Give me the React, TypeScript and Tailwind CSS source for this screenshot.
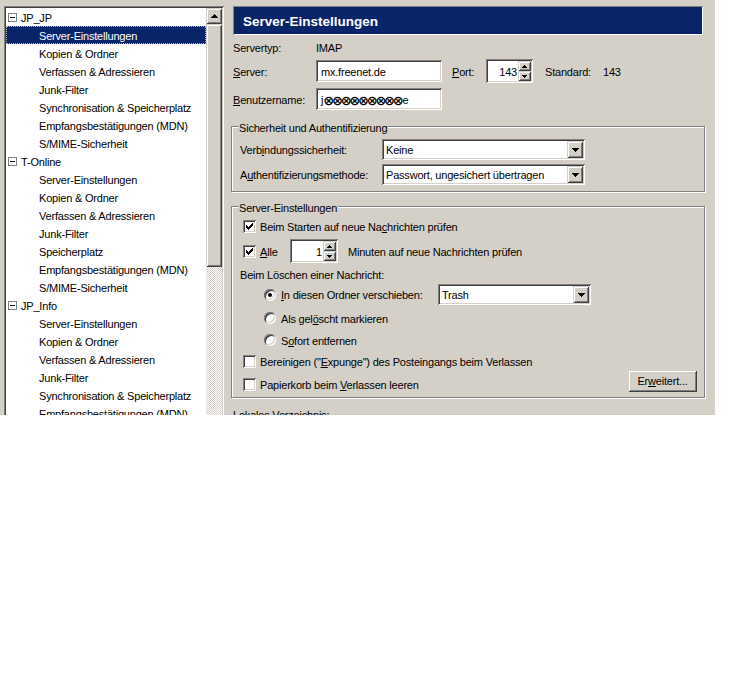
import React from "react";

const sunken =
  "shadow-[inset_1px_1px_0_#808080,inset_-1px_-1px_0_#ffffff,inset_2px_2px_0_#404040,inset_-2px_-2px_0_#d4d0c8]";
const raised =
  "shadow-[inset_1px_1px_0_#d4d0c8,inset_-1px_-1px_0_#404040,inset_2px_2px_0_#ffffff,inset_-2px_-2px_0_#808080]";
const etched =
  "border border-[#808080] shadow-[inset_1px_1px_0_#ffffff,1px_1px_0_#ffffff]";

function Tri({ dir, size = 7 }: { dir: "up" | "down"; size?: number }) {
  const rows = Math.ceil(size / 2);
  const rects = [];
  for (let i = 0; i < rows; i++) {
    const y = dir === "down" ? i : rows - 1 - i;
    rects.push(<rect key={i} x={i} y={y} width={size - 2 * i} height={1} fill="#000" />);
  }
  return (
    <svg width={size} height={rows} shapeRendering="crispEdges">
      {rects}
    </svg>
  );
}

const checkCols: [number, number][] = [
  [3, 5],
  [4, 6],
  [5, 7],
  [6, 6],
  [7, 5],
  [8, 4],
  [9, 3],
];

function Check({ checked }: { checked?: boolean }) {
  return (
    <div className={`relative w-[13px] h-[13px] shrink-0 bg-white ${sunken}`}>
      {checked && (
        <svg width="13" height="13" className="absolute left-0 top-0" shapeRendering="crispEdges">
          {checkCols.map(([x, y]) => (
            <rect key={x} x={x} y={y} width={1} height={3} fill="#000" />
          ))}
        </svg>
      )}
    </div>
  );
}

function Radio({ checked }: { checked?: boolean }) {
  return (
    <div
      className={`w-[12px] h-[12px] shrink-0 rounded-full bg-white flex items-center justify-center shadow-[inset_1px_1px_0_#808080,inset_-1px_-1px_0_#ffffff,inset_2px_2px_0_#404040,inset_-2px_-2px_0_#d4d0c8]`}
    >
      {checked && <div className="w-[4px] h-[4px] rounded-full bg-black" />}
    </div>
  );
}

function DropBtn() {
  return (
    <div className={`w-[16px] h-[17px] shrink-0 bg-[#d4d0c8] ${raised} flex items-center justify-center`}>
      <Tri dir="down" />
    </div>
  );
}

function Select({ text, className }: { text: string; className: string }) {
  return (
    <div className={`h-[21px] bg-white ${sunken} flex items-center p-[2px] ${className}`}>
      <div className="flex-1 pl-[2px] pt-[2px] whitespace-nowrap overflow-hidden">{text}</div>
      <DropBtn />
    </div>
  );
}

function Spin({ value, className }: { value: string; className: string }) {
  return (
    <div className={`h-[24px] bg-white ${sunken} flex p-[2px] ${className}`}>
      <div className="flex-1 flex items-center justify-end pr-[1px] pt-[2px]">{value}</div>
      <div className="w-[13px] flex flex-col">
        <div className={`flex-1 bg-[#d4d0c8] ${raised} flex items-center justify-center`}>
          <Tri dir="up" size={5} />
        </div>
        <div className={`flex-1 bg-[#d4d0c8] ${raised} flex items-center justify-center`}>
          <Tri dir="down" size={5} />
        </div>
      </div>
    </div>
  );
}

function Field({ children, className }: { children: React.ReactNode; className: string }) {
  return (
    <div className={`h-[22px] bg-white ${sunken} flex items-center pl-[5px] pt-[2px] ${className}`}>{children}</div>
  );
}

const U = ({ children }: { children: React.ReactNode }) => <span className="underline underline-offset-[1px]">{children}</span>;

type Item = { label: string; top?: boolean; selected?: boolean };
const sub = (labels: string[]): Item[] => labels.map((l) => ({ label: l }));
const tree: Item[] = [
  { label: "JP_JP", top: true },
  { label: "Server-Einstellungen", selected: true },
  ...sub([
    "Kopien & Ordner",
    "Verfassen & Adressieren",
    "Junk-Filter",
    "Synchronisation & Speicherplatz",
    "Empfangsbestätigungen (MDN)",
    "S/MIME-Sicherheit",
  ]),
  { label: "T-Online", top: true },
  ...sub([
    "Server-Einstellungen",
    "Kopien & Ordner",
    "Verfassen & Adressieren",
    "Junk-Filter",
    "Speicherplatz",
    "Empfangsbestätigungen (MDN)",
    "S/MIME-Sicherheit",
  ]),
  { label: "JP_Info", top: true },
  ...sub([
    "Server-Einstellungen",
    "Kopien & Ordner",
    "Verfassen & Adressieren",
    "Junk-Filter",
    "Synchronisation & Speicherplatz",
    "Empfangsbestätigungen (MDN)",
    "S/MIME-Sicherheit",
  ]),
];

function Tree() {
  return (
    <div className={`ml-[4px] mt-[6px] w-[220px] h-[430px] shrink-0 bg-white ${sunken} p-[2px] flex`}>
      <div className="w-[200px] flex flex-col">
        {tree.map((it, i) =>
          it.top ? (
            <div key={i} className="h-[18px] flex items-center shrink-0">
              <div className="ml-[2px] w-[9px] h-[9px] border border-[#808080] bg-white flex items-center justify-center">
                <div className="w-[5px] h-[1px] bg-black" />
              </div>
              <span className="ml-[4px] pt-[2px] whitespace-nowrap">{it.label}</span>
            </div>
          ) : (
            <div
              key={i}
              className={`h-[18px] flex items-center shrink-0 pl-[33px] pt-[2px] whitespace-nowrap ${
                it.selected
                  ? "bg-[#0a246a] text-white outline-1 outline-dotted outline-[#b8b8a8] -outline-offset-1"
                  : ""
              }`}
            >
              {it.label}
            </div>
          )
        )}
      </div>
      <div className="w-[16px] flex flex-col">
        <div className={`h-[16px] shrink-0 bg-[#d4d0c8] ${raised} flex items-center justify-center`}>
          <Tri dir="up" />
        </div>
        <div className={`h-[243px] shrink-0 bg-[#d4d0c8] ${raised}`} />
        <div className="flex-1 bg-[repeating-conic-gradient(#d4d0c8_0%_25%,#ffffff_0%_50%)] bg-[length:2px_2px]" />
      </div>
    </div>
  );
}

function Group({ title, className, children }: { title: string; className: string; children: React.ReactNode }) {
  return (
    <div className={`relative ${etched} ${className}`}>
      <span className="absolute -top-[5px] left-[6px] px-[1px] bg-[#d4d0c8] whitespace-nowrap">{title}</span>
      {children}
    </div>
  );
}

export default function App() {
  return (
    <div className="w-[744px] h-[676px] bg-white">
      <div className="w-[715px] h-[415px] overflow-hidden flex bg-[#d4d0c8] text-black text-[11px] leading-[13px] tracking-[-0.2px] font-['Liberation_Sans',Arial,sans-serif]">
        <Tree />
        <div className="ml-[7px] w-[474px] shrink-0 flex flex-col">
          <div className="mt-[6px] mx-[2px] h-[29px] shrink-0 bg-[#0a246a] shadow-[inset_1px_1px_0_#808080,inset_-1px_-1px_0_#ffffff] flex items-center pl-[10px] pt-[2px] text-white font-bold text-[13.5px] tracking-normal">
            Server-Einstellungen
          </div>

          <div className="mt-[3px] h-[18px] shrink-0 flex items-center pl-[2px] pt-[2px]">
            <span className="w-[83px]">Servertyp:</span>
            <span>IMAP</span>
          </div>

          <div className="mt-[3px] h-[24px] shrink-0 flex items-center pl-[2px]">
            <span className="w-[83px] pt-[2px]">
              <U>S</U>erver:
            </span>
            <Field className="w-[126px]">mx.freenet.de</Field>
            <span className="ml-[10px] w-[34px] pt-[2px]">
              <U>P</U>ort:
            </span>
            <Spin value="143" className="w-[47px]" />
            <span className="ml-[12px] w-[58px] pt-[2px]">Standard:</span>
            <span className="pt-[2px]">143</span>
          </div>

          <div className="mt-[5px] h-[22px] shrink-0 flex items-center pl-[2px]">
            <span className="w-[83px] pt-[2px]">
              <U>B</U>enutzername:
            </span>
            <Field className="w-[126px]">
              <span className="flex items-center leading-[13px]">
                <span>j</span>
                <span className="font-bold tracking-[-2.2px] font-['DejaVu_Sans',sans-serif] text-[13px]">⊗⊗⊗⊗⊗⊗⊗⊗⊗</span>
                <span className="ml-[1px]">e</span>
              </span>
            </Field>
          </div>

          <Group title="Sicherheit und Authentifizierung" className="mt-[16px] h-[66px] shrink-0 pt-[12px] pl-[8px] flex flex-col gap-[4px]">
            <div className="h-[21px] flex items-center">
              <span className="w-[142px] pt-[2px]">
                Verb<U>i</U>ndungssicherheit:
              </span>
              <Select text="Keine" className="w-[203px]" />
            </div>
            <div className="h-[21px] flex items-center">
              <span className="w-[142px] pt-[2px]">
                A<U>u</U>thentifizierungsmethode:
              </span>
              <Select text="Passwort, ungesichert übertragen" className="w-[203px]" />
            </div>
          </Group>

          <Group title="Server-Einstellungen" className="mt-[14px] h-[192px] shrink-0 pt-[13px] pl-[8px] pr-[7px] flex flex-col">
            <div className="h-[13px] flex items-center ml-[3px] gap-[4px]">
              <Check checked />
              <span className="pt-[2px]">
                Beim Starten auf neue Na<U>c</U>hrichten prüfen
              </span>
            </div>
            <div className="mt-[6px] h-[24px] flex items-center ml-[3px]">
              <Check checked />
              <span className="ml-[4px] w-[30px] pt-[2px]">
                <U>A</U>lle
              </span>
              <Spin value="1" className="w-[48px]" />
              <span className="ml-[10px] pt-[2px]">Minuten auf neue Nachrichten prüfen</span>
            </div>
            <div className="mt-[5px] h-[13px] flex items-center pt-[2px]">Beim Löschen einer Nachricht:</div>
            <div className="mt-[3px] h-[21px] flex items-center ml-[24px]">
              <Radio checked />
              <span className="ml-[5px] w-[157px] pt-[2px]">
                <U>I</U>n diesen Ordner verschieben:
              </span>
              <Select text="Trash" className="w-[153px]" />
            </div>
            <div className="mt-[4px] h-[18px] flex items-center ml-[24px]">
              <Radio />
              <span className="ml-[5px] pt-[2px]">
                Als gel<U>ö</U>scht markieren
              </span>
            </div>
            <div className="mt-[4px] h-[18px] flex items-center ml-[24px]">
              <Radio />
              <span className="ml-[5px] pt-[2px]">
                S<U>o</U>fort entfernen
              </span>
            </div>
            <div className="mt-[4px] h-[17px] flex items-center ml-[3px] gap-[4px]">
              <Check />
              <span className="pt-[2px]">
                Bereinigen ("<U>E</U>xpunge") des Posteingangs beim Verlassen
              </span>
            </div>
            <div className="h-[22px] flex items-start ml-[3px]">
              <div className="mt-[7px] flex items-center gap-[4px]">
                <Check />
                <span className="pt-[2px]">
                  Papierkorb beim <U>V</U>erlassen leeren
                </span>
              </div>
              <div className={`ml-auto w-[69px] h-[22px] bg-[#d4d0c8] ${raised} flex items-center justify-center pt-[1px]`}>
                Er<U>w</U>eitert...
              </div>
            </div>
          </Group>

          <div className="mt-[11px] pl-[2px] whitespace-nowrap">Lokales Verzeichnis:</div>
        </div>
      </div>
    </div>
  );
}
